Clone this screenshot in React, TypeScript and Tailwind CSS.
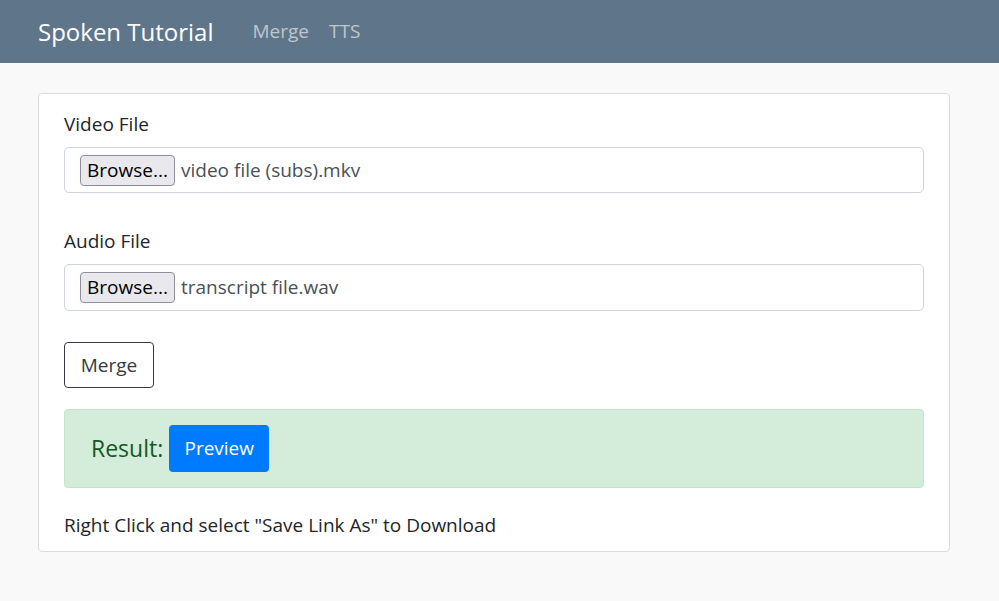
export default function App() {
  return (
    <div className="min-h-[601px] bg-[#f9f9f9] font-['Open_Sans',sans-serif] text-[#212529]">
      <nav className="flex h-[63px] items-center bg-[#5f768a] pl-[38px]">
        <span className="text-[24px] text-white">Spoken Tutorial</span>
        <div className="ml-[39px] flex gap-[20px] text-[19px] text-white/60">
          <span>Merge</span>
          <span>TTS</span>
        </div>
      </nav>
      <div className="ml-[38px] mt-[30px] w-[912px] rounded-[4px] border border-[#dcdcdc] bg-white px-[25px] pb-[12px] pt-[16px]">
        <div className="text-[19px] leading-[28px]">Video File</div>
        <div className="mt-[9px] flex h-[46px] items-center rounded-[5px] border border-[#ced4da] pl-[15px]">
          <span className="flex h-[31px] w-[95px] items-center justify-center rounded-[4px] border border-[#8f8f9d] bg-[#e9e9ed] text-[19px] text-black">
            Browse...
          </span>
          <span className="ml-[6px] text-[19px] text-[#495057]">video file (subs).mkv</span>
        </div>
        <div className="mt-[34px] text-[19px] leading-[28px]">Audio File</div>
        <div className="mt-[9px] flex h-[47px] items-center rounded-[5px] border border-[#ced4da] pl-[15px]">
          <span className="flex h-[31px] w-[95px] items-center justify-center rounded-[4px] border border-[#8f8f9d] bg-[#e9e9ed] text-[19px] text-black">
            Browse...
          </span>
          <span className="ml-[6px] text-[19px] text-[#495057]">transcript file.wav</span>
        </div>
        <button className="mt-[31px] flex h-[46px] w-[90px] items-center justify-center rounded-[4px] border border-[#343a40] text-[19px] text-[#343a40]">
          Merge
        </button>
        <div className="mt-[21px] flex h-[79px] items-center rounded-[4px] border border-[#c3e6cb] bg-[#d4edda] pl-[26px]">
          <span className="text-[23px] text-[#155724]">Result:</span>
          <span className="ml-[6px] flex h-[47px] w-[100px] items-center justify-center rounded-[4px] bg-[#007bff] text-[19px] text-white">
            Preview
          </span>
        </div>
        <div className="mt-[23px] text-[19px] leading-[28px]">Right Click and select "Save Link As" to Download</div>
      </div>
    </div>
  );
}
